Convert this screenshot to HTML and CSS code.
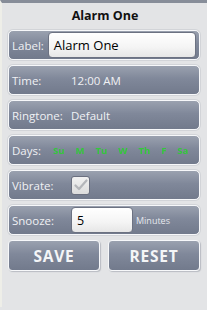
FILE: index.html
```html
<!DOCTYPE html>
<html>
<head>
<meta charset="utf-8">
<link rel="stylesheet" href="styles.css">
</head>
<body>
<div class="screen">
  <div class="title">Alarm One</div>
  <div class="rows">
    <div class="row row-label">
      <span class="key key-label">Label:</span>
      <div class="field field-wide">Alarm One</div>
    </div>
    <div class="row">
      <span class="key">Time:</span>
      <span class="val">12:00 AM</span>
    </div>
    <div class="row">
      <span class="key">Ringtone:</span>
      <span class="val">Default</span>
    </div>
    <div class="row">
      <span class="key">Days:</span>
      <span class="days"><span>Su</span><span>M</span><span>Tu</span><span>W</span><span>Th</span><span>F</span><span>Sa</span></span>
    </div>
    <div class="row">
      <span class="key">Vibrate:</span>
      <span class="check"><svg width="14" height="12" viewBox="0 0 14 12"><path d="M1.5 6.5 L5 10 L12.5 1.5" fill="none" stroke="#b4b6ba" stroke-width="2.2" stroke-linecap="round" stroke-linejoin="round"/></svg></span>
    </div>
    <div class="row">
      <span class="key">Snooze:</span>
      <div class="field field-snooze">5</div>
      <span class="unit">Minutes</span>
    </div>
  </div>
  <div class="buttons">
    <div class="btn">SAVE</div>
    <div class="btn">RESET</div>
  </div>
</div>
</body>
</html>
```
FILE: styles.css
```css
html, body {
  margin: 0;
  padding: 0;
}
body {
  width: 207px;
  height: 310px;
  background: #e3e4e6;
  font-family: "Open Sans", "DejaVu Sans", sans-serif;
  overflow: hidden;
}
.screen {
  border-top: 3px solid #878d99;
  border-left: 2px solid #eeeee8;
  height: 307px;
  box-sizing: border-box;
  padding: 0 7px 0 6px;
}
.title {
  height: 27px;
  line-height: 26px;
  text-align: center;
  font-weight: bold;
  font-size: 12.5px;
  color: #111;
  padding-left: 2px;
}
.rows {
  display: flex;
  flex-direction: column;
  gap: 5px;
}
.row {
  height: 30px;
  box-sizing: border-box;
  border: 1px solid #f7f8fa;
  border-radius: 5px;
  background: linear-gradient(#9aa1af, #80889a 45%, #727a8c);
  box-shadow: 0 0 0 1px #d2d4d8;
  display: flex;
  align-items: center;
  padding: 0 3px 0 3px;
  color: #f0f1f4;
  font-size: 11.5px;
}
.key {
  width: 59px;
  flex: none;
}
.key-label {
  width: auto;
  margin-right: 4px;
  font-size: 11.5px;
}
.val {
  font-size: 11.5px;
}
.field {
  background: linear-gradient(#ffffff, #f4f4f4 60%, #e6e6e6);
  border: 1px solid #6c7282;
  border-radius: 4px;
  box-sizing: border-box;
  color: #000;
  display: flex;
  align-items: center;
}
.field-wide {
  flex: 1;
  height: 26px;
  font-size: 13px;
  padding-left: 5px;
}
.field-snooze {
  width: 62px;
  height: 26px;
  font-size: 12.5px;
  padding-left: 5px;
}
.unit {
  font-size: 9px;
  margin-left: 3px;
  color: #e6e8ee;
}
.days {
  display: flex;
  gap: 11px;
  font-size: 9.5px;
  font-weight: bold;
  color: #34c83c;
  margin-left: -18px;
  filter: blur(0.35px);
}
.check {
  width: 19px;
  height: 19px;
  box-sizing: border-box;
  border: 1px solid #6b7080;
  border-radius: 3px;
  background: linear-gradient(#f2f2f2, #dcdcdc);
  display: flex;
  align-items: center;
  justify-content: center;
}
.buttons {
  display: flex;
  gap: 8px;
  margin-top: 5px;
}
.btn {
  flex: 1;
  height: 31px;
  box-sizing: border-box;
  border: 1px solid #f7f8fa;
  border-radius: 4px;
  background: linear-gradient(#9aa1af, #80889a 45%, #727a8c);
  box-shadow: 1px 1px 1px #b8bbc2;
  display: flex;
  align-items: center;
  justify-content: center;
  color: #f4f5f7;
  font-weight: bold;
  font-size: 15.5px;
  letter-spacing: 0.8px;
}
```
